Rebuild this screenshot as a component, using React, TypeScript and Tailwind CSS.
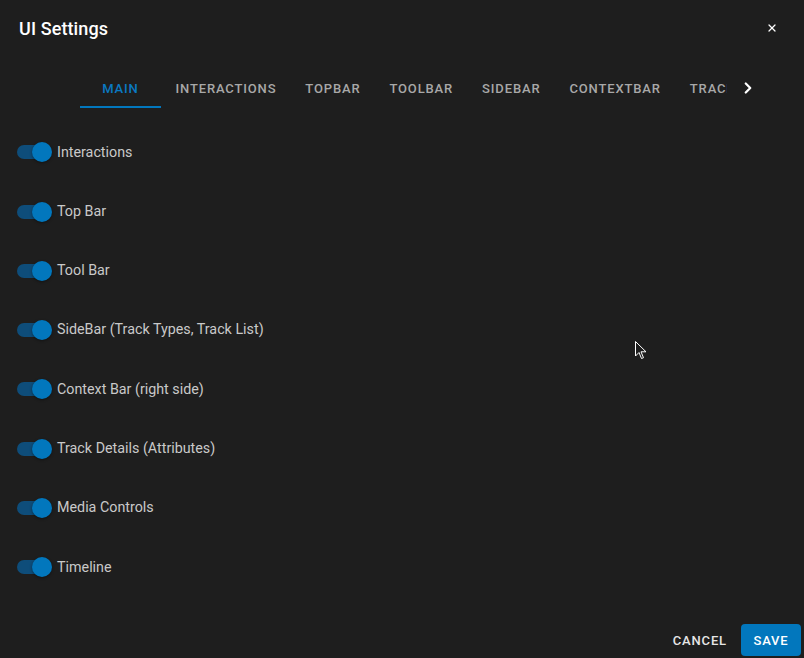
import { ChevronRight, X } from "lucide-react";

const tabs = ["Main", "Interactions", "TopBar", "ToolBar", "SideBar", "ContextBar", "Tracks"];

const settings = [
  "Interactions",
  "Top Bar",
  "Tool Bar",
  "SideBar (Track Types, Track List)",
  "Context Bar (right side)",
  "Track Details (Attributes)",
  "Media Controls",
  "Timeline",
];

function Toggle() {
  return (
    <div className="relative w-[34px] h-[14px] rounded-full bg-[#0e4d7a]">
      <div className="absolute left-[15px] top-[-3px] w-[20px] h-[20px] rounded-full bg-[#0277bd] shadow-[0_1px_3px_rgba(0,0,0,0.4)]" />
    </div>
  );
}

export default function App() {
  return (
    <div className="relative w-[804px] h-[658px] bg-[#1e1e1e] flex flex-col overflow-hidden font-['Roboto',sans-serif]">
      <div className="h-[56px] flex items-center justify-between pl-[19px] pr-[26px]">
        <h1 className="text-[18px] font-medium text-white tracking-[0.1px]">UI Settings</h1>
        <X size={12} strokeWidth={2.5} className="text-white" />
      </div>

      <div className="mt-[10px] h-[42px] flex items-center">
        <div className="w-[80px]" />
        <div className="w-[647px] h-full overflow-hidden flex">
          {tabs.map((t, i) => (
            <div
              key={t}
              className={`relative h-full flex items-center justify-center shrink-0 px-[14.5px] pt-[3px] text-[13px] font-medium uppercase tracking-[0.85px] ${
                i === 0 ? "min-w-[81px] text-[#0a79c2]" : "text-[#a8a8a8]"
              }`}
            >
              {t}
              {i === 0 && <div className="absolute left-0 right-0 bottom-0 h-[2px] bg-[#0277bd]" />}
            </div>
          ))}
        </div>
        <div className="w-[40px] h-full flex items-center pl-[12px] pt-[1px]">
          <ChevronRight size={18} strokeWidth={3} className="text-white" />
        </div>
      </div>

      <div className="mt-[14.6px] flex flex-col">
        {settings.map((s) => (
          <div key={s} className="h-[59.3px] flex items-center pl-[17px]">
            <Toggle />
            <span className="ml-[6px] text-[14.3px] text-[#c9c9c9]">{s}</span>
          </div>
        ))}
      </div>

      <div className="mt-auto h-[36px] flex items-center justify-end gap-[5px] pr-[3px] pb-[1px]">
        <button className="h-[32px] px-[9px] pt-[2px] text-[13px] font-medium uppercase tracking-[0.85px] text-[#e6e6e6]">
          Cancel
        </button>
        <button className="h-[32px] w-[60px] rounded-[4px] bg-[#0277bd] pt-[2px] text-[13px] font-medium uppercase tracking-[0.85px] text-white">
          Save
        </button>
      </div>

      <svg className="absolute left-[635px] top-[341px]" width="12" height="19" viewBox="0 0 12 19">
        <path d="M0.5 0.5 L0.5 15 L4 11.5 L6.5 17.5 L8.5 16.7 L6 10.8 L11 10.8 Z" fill="#1e1e1e" stroke="#ffffff" strokeWidth="1" />
      </svg>
    </div>
  );
}
